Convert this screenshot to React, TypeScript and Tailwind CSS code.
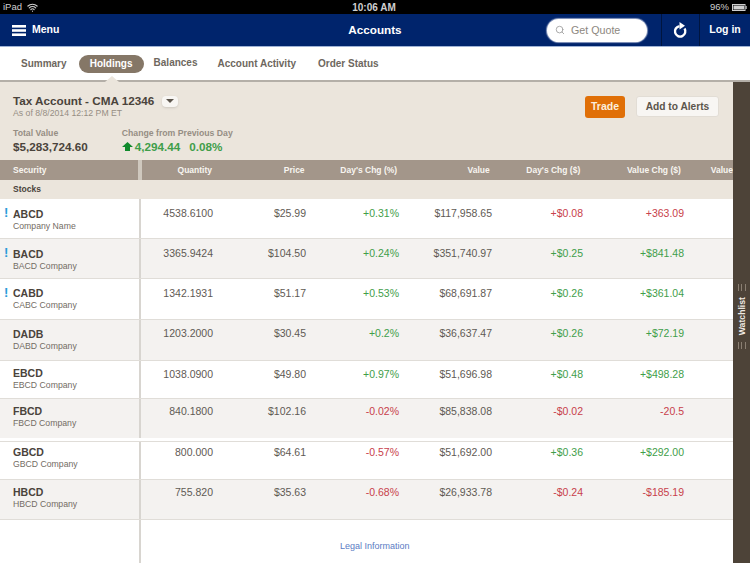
import React from "react";
import { Search, Wifi } from "lucide-react";

type Row = { s: string; n: string; q: string; p: string; d: string; v: string; c: string; x: string; h: string; sp: string; np: string; bg: string; red?: boolean; flag?: boolean };

const rows: Row[] = [
  { s: "ABCD", n: "Company Name", q: "4538.6100", p: "$25.99", d: "+0.31%", v: "$117,958.65", c: "+$0.08", x: "+363.09", h: "h-[40px] border-b border-[#e0ddd8]", sp: "pt-[9px]", np: "pt-[8px]", bg: "bg-white", flag: true, red: true },
  { s: "BACD", n: "BACD Company", q: "3365.9424", p: "$104.50", d: "+0.24%", v: "$351,740.97", c: "+$0.25", x: "+$841.48", h: "h-[40px] border-b border-[#e0ddd8]", sp: "pt-[9px]", np: "pt-[8px]", bg: "bg-[#f4f2f0]", flag: true },
  { s: "CABD", n: "CABC Company", q: "1342.1931", p: "$51.17", d: "+0.53%", v: "$68,691.87", c: "+$0.26", x: "+$361.04", h: "h-[41px] border-b border-[#e0ddd8]", sp: "pt-[8px]", np: "pt-[8px]", bg: "bg-white", flag: true },
  { s: "DADB", n: "DABD Company", q: "1203.2000", p: "$30.45", d: "+0.2%", v: "$36,637.47", c: "+$0.26", x: "+$72.19", h: "h-[41px] border-b border-[#e0ddd8]", sp: "pt-[8px]", np: "pt-[7px]", bg: "bg-[#f4f2f0]" },
  { s: "EBCD", n: "EBCD Company", q: "1038.0900", p: "$49.80", d: "+0.97%", v: "$51,696.98", c: "+$0.48", x: "+$498.28", h: "h-[38px] border-b border-[#e0ddd8]", sp: "pt-[6px]", np: "pt-[7px]", bg: "bg-white" },
  { s: "FBCD", n: "FBCD Company", q: "840.1800", p: "$102.16", d: "-0.02%", v: "$85,838.08", c: "-$0.02", x: "-20.5", h: "h-[42px] border-b-[3px] border-white", sp: "pt-[6px]", np: "pt-[6px]", bg: "bg-[#f4f2f0]" },
  { s: "GBCD", n: "GBCD Company", q: "800.000", p: "$64.61", d: "-0.57%", v: "$51,692.00", c: "+$0.36", x: "+$292.00", h: "h-[39px] border-y border-[#e0ddd8]", sp: "pt-[4px]", np: "pt-[4px]", bg: "bg-white" },
  { s: "HBCD", n: "HBCD Company", q: "755.820", p: "$35.63", d: "-0.68%", v: "$26,933.78", c: "-$0.24", x: "-$185.19", h: "h-[40px] border-b border-[#e0ddd8]", sp: "pt-[6px]", np: "pt-[6px]", bg: "bg-[#f4f2f0]" },
];

const tone = (t: string, red?: boolean) => (red || t.startsWith("-") ? "text-[#c8414b]" : "text-[#3f9e4a]");

function Nav() {
  return (
    <div className="flex h-[33px] shrink-0 items-center bg-[#00246c] border-b border-[#9fb3d6] text-white">
      <div className="flex w-[330px] items-center gap-[6px] pl-3">
        <svg width="14" height="11" viewBox="0 0 14 11">
          <rect width="14" height="2.6" fill="#fff" />
          <rect y="4.2" width="14" height="2.6" fill="#fff" />
          <rect y="8.4" width="14" height="2.6" fill="#fff" />
        </svg>
        <span className="text-[10.5px] font-bold">Menu</span>
      </div>
      <div className="w-[90px] text-center text-[11.7px] font-bold">Accounts</div>
      <div className="ml-[127px] flex h-[23px] w-[100px] items-center gap-[6px] rounded-full bg-white pl-2 shadow-[0_0_1px_1px_#8c9cc0]">
        <Search size={10} strokeWidth={2} className="text-[#9a9a9a]" />
        <span className="text-[10.7px] text-[#8d8880]">Get Quote</span>
      </div>
      <div className="ml-[14px] flex h-full w-[39px] items-center justify-center border-x border-[#00153f]">
        <svg width="15" height="17" viewBox="0 0 15 17">
          <path d="M11.5 6.5 A5.2 5.2 0 1 1 6.5 4.2" fill="none" stroke="#fff" strokeWidth="2.4" />
          <polygon points="6.5,0 12,3.8 6.5,7.6" fill="#fff" />
        </svg>
      </div>
      <div className="flex-1 text-center text-[10.5px] font-bold">Log in</div>
    </div>
  );
}

function Tabs() {
  return (
    <div className="relative flex h-[35px] shrink-0 items-center bg-white pl-[21px] text-[10px] font-bold text-[#6e675e] border-b-2 border-[#b4afa8]">
      <span>Summary</span>
      <span className="ml-[12px] flex h-[18px] w-[65px] items-center justify-center rounded-full bg-[#857767] text-white">Holdings</span>
      <span className="ml-[10px] -translate-y-px">Balances</span>
      <span className="ml-[20px]">Account Activity</span>
      <span className="ml-[22px]">Order Status</span>
      <div className="absolute bottom-[-2px] left-[105px] h-0 w-0 border-x-[7px] border-b-[6px] border-x-transparent border-b-[#ebe5dc]" />
    </div>
  );
}

function Summary() {
  return (
    <div className="flex h-[78px] shrink-0 justify-between bg-[#ebe5dc] pl-[13px] pr-[14px]">
      <div className="flex flex-col">
        <div className="mt-[12px] flex items-center gap-[8px]">
          <span className="text-[11.7px] font-bold leading-[14px] text-[#4a433b]">Tax Account - CMA 12346</span>
          <span className="flex h-[11px] w-[16px] items-center justify-center rounded-sm bg-[#f8f6f3] shadow-sm">
            <span className="h-0 w-0 border-x-[4px] border-t-[4px] border-x-transparent border-t-[#5c554c]" />
          </span>
        </div>
        <span className="text-[8.7px] leading-[11px] text-[#968e84]">As of 8/8/2014 12:12 PM ET</span>
        <div className="mt-[8px] flex gap-[34px]">
          <div className="flex flex-col">
            <span className="text-[8.7px] font-bold leading-[12px] text-[#968e84]">Total Value</span>
            <span className="text-[11.7px] font-bold leading-[15px] text-[#4a433b]">$5,283,724.60</span>
          </div>
          <div className="flex flex-col">
            <span className="text-[8.7px] font-bold leading-[12px] text-[#968e84]">Change from Previous Day</span>
            <span className="flex items-center text-[11.7px] font-bold leading-[15px] text-[#3f9e4a]">
              <svg width="11" height="9" viewBox="0 0 11 9" className="mr-[2px]">
                <polygon points="5.5,0 11,5 8,5 8,9 3,9 3,5 0,5" fill="#108a2c" />
              </svg>
              <span>4,294.44</span>
              <span className="ml-[9px]">0.08%</span>
            </span>
          </div>
        </div>
      </div>
      <div className="mt-[14px] flex items-start gap-[11px]">
        <button className="h-[22px] w-[40px] rounded-[3px] bg-[#e06f07] text-[10.5px] font-bold text-[#fbeedd]">Trade</button>
        <button className="h-[21px] w-[83px] rounded-[3px] border border-[#e2ddd5] bg-[#f8f6f3] text-[10.2px] font-bold text-[#5c554c]">Add to Alerts</button>
      </div>
    </div>
  );
}

function Cells({ r }: { r: Row }) {
  return (
    <>
      <div className="w-[72px] text-right text-[#5f5a54]">{r.q}</div>
      <div className="w-[93px] text-right text-[#5f5a54]">{r.p}</div>
      <div className={`w-[93px] text-right ${tone(r.d)}`}>{r.d}</div>
      <div className="w-[93px] text-right text-[#5f5a54]">{r.v}</div>
      <div className={`w-[91px] text-right ${tone(r.c, r.red)}`}>{r.c}</div>
      <div className={`w-[101px] text-right ${tone(r.x, r.red)}`}>{r.x}</div>
    </>
  );
}

function Table() {
  return (
    <div className="flex flex-1 flex-col">
      <div className="flex h-[20px] shrink-0 items-center bg-[#a3968a] text-[8.5px] font-bold text-[#f8f5f0]">
        <div className="w-[139px] pl-[13px]">Security</div>
        <div className="h-full w-[4px] bg-[#cfc8be]" />
        <div className="w-[70px] text-right">Quantity</div>
        <div className="w-[93px] text-right">Price</div>
        <div className="w-[93px] text-right">Day's Chg (%)</div>
        <div className="w-[93px] text-right">Value</div>
        <div className="w-[91px] text-right">Day's Chg ($)</div>
        <div className="w-[101px] text-right">Value Chg ($)</div>
        <div className="ml-[30px]">Value</div>
      </div>
      <div className="flex h-[19px] shrink-0 items-center bg-[#ebe5dc] pl-[13px] text-[8.5px] font-bold text-[#4a433b]">Stocks</div>
      {rows.map((r) => (
        <div key={r.s} className={`flex shrink-0 text-[10.5px] ${r.h} ${r.bg}`}>
          <div className={`relative w-[139px] pl-[13px] ${r.sp}`}>
            {r.flag && <span className="absolute left-[4px] top-[6px] text-[13px] font-bold leading-[15px] text-[#2a9bd8]">!</span>}
            <div className="text-[10.5px] font-bold leading-[13px] text-[#4a433b]">{r.s}</div>
            <div className="text-[8.7px] leading-[11px] text-[#736c64]">{r.n}</div>
          </div>
          <div className="w-[2px] bg-[#d8d5d0]" />
          <div className={`flex flex-1 leading-[13px] ${r.np}`}>
            <Cells r={r} />
          </div>
        </div>
      ))}
      <div className="flex flex-1 bg-white">
        <div className="w-[139px]" />
        <div className="w-[2px] bg-[#d8d5d0]" />
        <div className="ml-[199px] pt-[20px] text-[9px] leading-[12px] text-[#5c7cc4]">Legal Information</div>
      </div>
    </div>
  );
}

function Watchlist() {
  return (
    <div className="flex w-[17px] shrink-0 flex-col items-center justify-center gap-[6px] bg-[#4d4338] pb-[12px]">
      <div className="flex h-[7px] w-[8px] flex-row justify-between">
        <i className="w-px bg-[#8a7f72]" /><i className="w-px bg-[#8a7f72]" /><i className="w-px bg-[#8a7f72]" />
      </div>
      <span className="text-[8.7px] font-bold leading-[10px] text-[#efeae3] [writing-mode:vertical-rl] rotate-180">Watchlist</span>
      <div className="flex h-[7px] w-[8px] flex-row justify-between">
        <i className="w-px bg-[#8a7f72]" /><i className="w-px bg-[#8a7f72]" /><i className="w-px bg-[#8a7f72]" />
      </div>
    </div>
  );
}

export default function App() {
  return (
    <div className="flex h-[563px] w-[750px] flex-col overflow-hidden bg-white font-['Liberation_Sans',Arial,sans-serif]">
      <div className="flex h-[14px] shrink-0 items-center justify-between bg-black px-[3px] text-[9.5px] text-[#cfcfcf]">
        <span className="flex items-center gap-[5px]">iPad <Wifi size={11} strokeWidth={2.5} /></span>
        <span className="text-[10px] font-bold">10:06 AM</span>
        <span className="flex items-center gap-[3px]">96%
          <svg width="15" height="7" viewBox="0 0 15 7">
            <rect x=".5" y=".5" width="12.5" height="6" fill="none" stroke="#cfcfcf" />
            <rect x="1.5" y="1.5" width="10.5" height="4" fill="#cfcfcf" />
            <rect x="13.5" y="2" width="1.2" height="3" fill="#cfcfcf" />
          </svg>
        </span>
      </div>
      <Nav />
      <Tabs />
      <div className="flex min-h-0 flex-1">
        <div className="flex min-w-0 flex-1 flex-col overflow-hidden">
          <Summary />
          <Table />
        </div>
        <Watchlist />
      </div>
    </div>
  );
}
